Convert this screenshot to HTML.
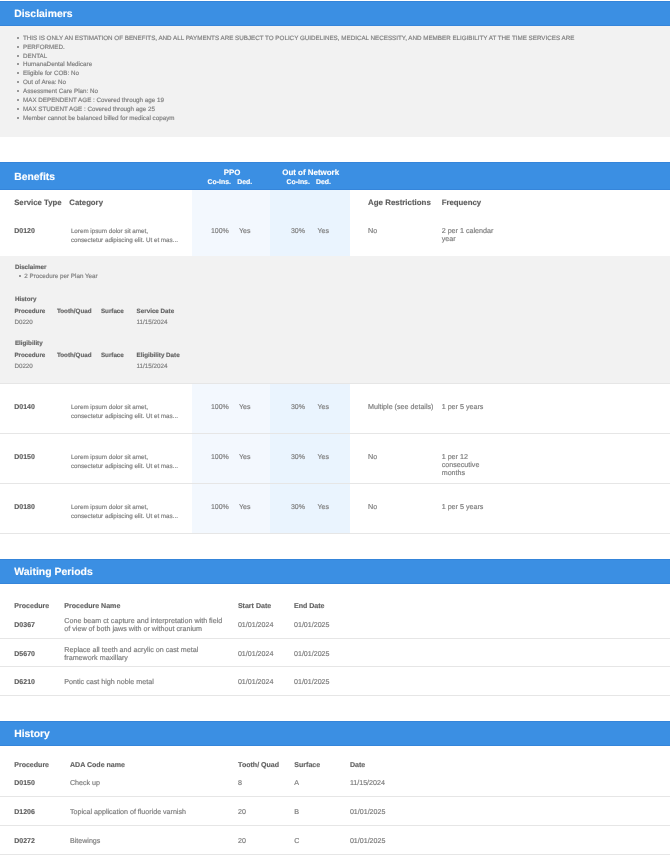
<!DOCTYPE html>
<html><head><meta charset="utf-8"><style>
html,body{margin:0;padding:0;background:#fff;}
body{width:670px;height:856px;position:relative;overflow:hidden;will-change:transform;font-family:"Liberation Sans",sans-serif;}
.t{position:absolute;white-space:nowrap;text-rendering:geometricPrecision;}
.r{position:absolute;}
</style></head><body>
<div class="r" style="left:0px;top:1px;width:670px;height:25px;background:#3b8fe3"></div>
<div class="r" style="left:0px;top:1px;width:670px;height:1px;background:#3585da"></div>
<div class="r" style="left:0px;top:25px;width:670px;height:1px;background:#3585da"></div>
<div class="t" style="left:14.2px;top:9px;font-size:10.4px;line-height:11.96px;color:#fff;font-weight:bold;-webkit-text-stroke:0.2px rgba(255,255,255,0.7);">Disclaimers</div>
<div class="r" style="left:0px;top:26px;width:670px;height:111px;background:#f2f2f2"></div>
<div class="r" style="left:17px;top:37px;width:2px;height:1.5px;border-radius:0;background:#999999"></div>
<div class="t" style="left:23px;top:35px;font-size:6.25px;line-height:7.19px;color:#6a6a6a;-webkit-text-stroke:0.2px #9a9a9a;">THIS IS ONLY AN ESTIMATION OF BENEFITS, AND ALL PAYMENTS ARE SUBJECT TO POLICY GUIDELINES, MEDICAL NECESSITY, AND MEMBER ELIGIBILITY AT THE TIME SERVICES ARE</div>
<div class="r" style="left:17px;top:46px;width:2px;height:1.5px;border-radius:0;background:#999999"></div>
<div class="t" style="left:23px;top:44px;font-size:6.25px;line-height:7.19px;color:#6a6a6a;-webkit-text-stroke:0.2px #9a9a9a;">PERFORMED.</div>
<div class="r" style="left:17px;top:55px;width:2px;height:1.5px;border-radius:0;background:#999999"></div>
<div class="t" style="left:23px;top:53px;font-size:6.25px;line-height:7.19px;color:#6a6a6a;-webkit-text-stroke:0.2px #9a9a9a;">DENTAL</div>
<div class="r" style="left:17px;top:63px;width:2px;height:1.5px;border-radius:0;background:#999999"></div>
<div class="t" style="left:23px;top:61px;font-size:6.25px;line-height:7.19px;color:#6a6a6a;-webkit-text-stroke:0.2px #9a9a9a;">HumanaDental Medicare</div>
<div class="r" style="left:17px;top:72px;width:2px;height:1.5px;border-radius:0;background:#999999"></div>
<div class="t" style="left:23px;top:70px;font-size:6.25px;line-height:7.19px;color:#6a6a6a;-webkit-text-stroke:0.2px #9a9a9a;">Eligible for COB: No</div>
<div class="r" style="left:17px;top:81px;width:2px;height:1.5px;border-radius:0;background:#999999"></div>
<div class="t" style="left:23px;top:79px;font-size:6.25px;line-height:7.19px;color:#6a6a6a;-webkit-text-stroke:0.2px #9a9a9a;">Out of Area: No</div>
<div class="r" style="left:17px;top:90px;width:2px;height:1.5px;border-radius:0;background:#999999"></div>
<div class="t" style="left:23px;top:88px;font-size:6.25px;line-height:7.19px;color:#6a6a6a;-webkit-text-stroke:0.2px #9a9a9a;">Assessment Care Plan: No</div>
<div class="r" style="left:17px;top:99px;width:2px;height:1.5px;border-radius:0;background:#999999"></div>
<div class="t" style="left:23px;top:97px;font-size:6.25px;line-height:7.19px;color:#6a6a6a;-webkit-text-stroke:0.2px #9a9a9a;">MAX DEPENDENT AGE : Covered through age 19</div>
<div class="r" style="left:17px;top:108px;width:2px;height:1.5px;border-radius:0;background:#999999"></div>
<div class="t" style="left:23px;top:106px;font-size:6.25px;line-height:7.19px;color:#6a6a6a;-webkit-text-stroke:0.2px #9a9a9a;">MAX STUDENT AGE : Covered through age 25</div>
<div class="r" style="left:17px;top:117px;width:2px;height:1.5px;border-radius:0;background:#999999"></div>
<div class="t" style="left:23px;top:115px;font-size:6.25px;line-height:7.19px;color:#6a6a6a;-webkit-text-stroke:0.2px #9a9a9a;">Member cannot be balanced billed for medical copaym</div>
<div class="r" style="left:0px;top:162px;width:670px;height:28px;background:#3b8fe3"></div>
<div class="r" style="left:0px;top:162px;width:670px;height:1px;background:#3585da"></div>
<div class="r" style="left:0px;top:189px;width:670px;height:1px;background:#3585da"></div>
<div class="t" style="left:14.2px;top:172px;font-size:10.35px;line-height:11.9px;color:#fff;font-weight:bold;-webkit-text-stroke:0.2px rgba(255,255,255,0.7);">Benefits</div>
<div class="t" style="left:132px;width:200px;text-align:center;top:168px;font-size:7.9px;line-height:9.08px;color:#fff;font-weight:bold;-webkit-text-stroke:0.2px rgba(255,255,255,0.7);">PPO</div>
<div class="t" style="left:207.6px;top:179px;font-size:6.9px;line-height:7.93px;color:#fff;font-weight:bold;-webkit-text-stroke:0.2px rgba(255,255,255,0.7);">Co-Ins.</div>
<div class="t" style="left:237.2px;top:179px;font-size:6.9px;line-height:7.93px;color:#fff;font-weight:bold;-webkit-text-stroke:0.2px rgba(255,255,255,0.7);">Ded.</div>
<div class="t" style="left:210.7px;width:200px;text-align:center;top:168px;font-size:7.95px;line-height:9.14px;color:#fff;font-weight:bold;-webkit-text-stroke:0.2px rgba(255,255,255,0.7);">Out of Network</div>
<div class="t" style="left:286.5px;top:179px;font-size:6.9px;line-height:7.93px;color:#fff;font-weight:bold;-webkit-text-stroke:0.2px rgba(255,255,255,0.7);">Co-Ins.</div>
<div class="t" style="left:316px;top:179px;font-size:6.9px;line-height:7.93px;color:#fff;font-weight:bold;-webkit-text-stroke:0.2px rgba(255,255,255,0.7);">Ded.</div>
<div class="r" style="left:192px;top:190px;width:78px;height:66px;background:#f3f8fe"></div>
<div class="r" style="left:270px;top:190px;width:80px;height:66px;background:#eaf4fe"></div>
<div class="t" style="left:14.2px;top:199px;font-size:7.78px;line-height:8.95px;color:#555555;font-weight:bold;-webkit-text-stroke:0.2px #888888;">Service Type</div>
<div class="t" style="left:69.3px;top:199px;font-size:7.78px;line-height:8.95px;color:#555555;font-weight:bold;-webkit-text-stroke:0.2px #888888;">Category</div>
<div class="t" style="left:368.1px;top:198px;font-size:7.9px;line-height:9.08px;color:#555555;font-weight:bold;-webkit-text-stroke:0.2px #888888;">Age Restrictions</div>
<div class="t" style="left:441.7px;top:199px;font-size:7.8px;line-height:8.97px;color:#555555;font-weight:bold;-webkit-text-stroke:0.2px #888888;">Frequency</div>
<div class="t" style="left:14.2px;top:228px;font-size:7.0px;line-height:8.05px;color:#555555;font-weight:bold;-webkit-text-stroke:0.2px #888888;">D0120</div>
<div class="t" style="left:70.9px;top:228px;font-size:6.25px;line-height:8.8px;color:#6a6a6a;-webkit-text-stroke:0.2px #9a9a9a;">Lorem ipsum dolor sit amet,<br>consectetur adipiscing elit. Ut et mas...</div>
<div class="t" style="left:210.9px;top:228px;font-size:7.0px;line-height:8.05px;color:#6a6a6a;-webkit-text-stroke:0.2px #9a9a9a;">100%</div>
<div class="t" style="left:239px;top:228px;font-size:7.0px;line-height:8.05px;color:#6a6a6a;-webkit-text-stroke:0.2px #9a9a9a;">Yes</div>
<div class="t" style="left:290.9px;top:228px;font-size:7.0px;line-height:8.05px;color:#6a6a6a;-webkit-text-stroke:0.2px #9a9a9a;">30%</div>
<div class="t" style="left:317.6px;top:228px;font-size:7.0px;line-height:8.05px;color:#6a6a6a;-webkit-text-stroke:0.2px #9a9a9a;">Yes</div>
<div class="t" style="left:368px;top:227px;font-size:7.15px;line-height:8.22px;color:#6a6a6a;-webkit-text-stroke:0.2px #9a9a9a;">No</div>
<div class="t" style="left:441.7px;top:228px;font-size:7.15px;line-height:7.9px;color:#6a6a6a;-webkit-text-stroke:0.2px #9a9a9a;">2 per 1 calendar<br>year</div>
<div class="r" style="left:0px;top:256px;width:670px;height:127px;background:#f2f2f2"></div>
<div class="r" style="left:0px;top:383px;width:670px;height:1px;background:#e6e6e6"></div>
<div class="t" style="left:14.9px;top:264px;font-size:6.25px;line-height:7.19px;color:#555555;font-weight:bold;-webkit-text-stroke:0.2px #888888;">Disclaimer</div>
<div class="r" style="left:19px;top:275px;width:2px;height:1.5px;border-radius:0;background:#999999"></div>
<div class="t" style="left:24.3px;top:273px;font-size:6.25px;line-height:7.19px;color:#6a6a6a;-webkit-text-stroke:0.2px #9a9a9a;">2 Procedure per Plan Year</div>
<div class="t" style="left:14.9px;top:296px;font-size:6.25px;line-height:7.19px;color:#555555;font-weight:bold;-webkit-text-stroke:0.2px #888888;">History</div>
<div class="t" style="left:14.4px;top:308px;font-size:6.25px;line-height:7.19px;color:#555555;font-weight:bold;-webkit-text-stroke:0.2px #888888;">Procedure</div>
<div class="t" style="left:56.9px;top:308px;font-size:6.25px;line-height:7.19px;color:#555555;font-weight:bold;-webkit-text-stroke:0.2px #888888;">Tooth/Quad</div>
<div class="t" style="left:100.9px;top:308px;font-size:6.25px;line-height:7.19px;color:#555555;font-weight:bold;-webkit-text-stroke:0.2px #888888;">Surface</div>
<div class="t" style="left:136.6px;top:308px;font-size:6.25px;line-height:7.19px;color:#555555;font-weight:bold;-webkit-text-stroke:0.2px #888888;">Service Date</div>
<div class="t" style="left:14.4px;top:319px;font-size:6.25px;line-height:7.19px;color:#6a6a6a;-webkit-text-stroke:0.2px #9a9a9a;">D0220</div>
<div class="t" style="left:136.6px;top:319px;font-size:6.25px;line-height:7.19px;color:#6a6a6a;-webkit-text-stroke:0.2px #9a9a9a;">11/15/2024</div>
<div class="t" style="left:14.9px;top:340px;font-size:6.25px;line-height:7.19px;color:#555555;font-weight:bold;-webkit-text-stroke:0.2px #888888;">Eligibility</div>
<div class="t" style="left:14.4px;top:352px;font-size:6.25px;line-height:7.19px;color:#555555;font-weight:bold;-webkit-text-stroke:0.2px #888888;">Procedure</div>
<div class="t" style="left:56.9px;top:352px;font-size:6.25px;line-height:7.19px;color:#555555;font-weight:bold;-webkit-text-stroke:0.2px #888888;">Tooth/Quad</div>
<div class="t" style="left:100.9px;top:352px;font-size:6.25px;line-height:7.19px;color:#555555;font-weight:bold;-webkit-text-stroke:0.2px #888888;">Surface</div>
<div class="t" style="left:136.6px;top:352px;font-size:6.25px;line-height:7.19px;color:#555555;font-weight:bold;-webkit-text-stroke:0.2px #888888;">Eligibility Date</div>
<div class="t" style="left:14.4px;top:363px;font-size:6.25px;line-height:7.19px;color:#6a6a6a;-webkit-text-stroke:0.2px #9a9a9a;">D0220</div>
<div class="t" style="left:136.6px;top:363px;font-size:6.25px;line-height:7.19px;color:#6a6a6a;-webkit-text-stroke:0.2px #9a9a9a;">11/15/2024</div>
<div class="r" style="left:192px;top:384px;width:78px;height:49px;background:#f3f8fe"></div>
<div class="r" style="left:270px;top:384px;width:80px;height:49px;background:#eaf4fe"></div>
<div class="r" style="left:0px;top:433px;width:670px;height:1px;background:#e6e6e6"></div>
<div class="t" style="left:14.2px;top:404px;font-size:7.0px;line-height:8.05px;color:#555555;font-weight:bold;-webkit-text-stroke:0.2px #888888;">D0140</div>
<div class="t" style="left:70.9px;top:404px;font-size:6.25px;line-height:8.8px;color:#6a6a6a;-webkit-text-stroke:0.2px #9a9a9a;">Lorem ipsum dolor sit amet,<br>consectetur adipiscing elit. Ut et mas...</div>
<div class="t" style="left:210.9px;top:404px;font-size:7.0px;line-height:8.05px;color:#6a6a6a;-webkit-text-stroke:0.2px #9a9a9a;">100%</div>
<div class="t" style="left:239px;top:404px;font-size:7.0px;line-height:8.05px;color:#6a6a6a;-webkit-text-stroke:0.2px #9a9a9a;">Yes</div>
<div class="t" style="left:290.9px;top:404px;font-size:7.0px;line-height:8.05px;color:#6a6a6a;-webkit-text-stroke:0.2px #9a9a9a;">30%</div>
<div class="t" style="left:317.6px;top:404px;font-size:7.0px;line-height:8.05px;color:#6a6a6a;-webkit-text-stroke:0.2px #9a9a9a;">Yes</div>
<div class="t" style="left:368px;top:403px;font-size:7.15px;line-height:8.22px;color:#6a6a6a;-webkit-text-stroke:0.2px #9a9a9a;">Multiple (see details)</div>
<div class="t" style="left:441.7px;top:404px;font-size:7.15px;line-height:7.9px;color:#6a6a6a;-webkit-text-stroke:0.2px #9a9a9a;">1 per 5 years</div>
<div class="r" style="left:192px;top:434px;width:78px;height:49px;background:#f3f8fe"></div>
<div class="r" style="left:270px;top:434px;width:80px;height:49px;background:#eaf4fe"></div>
<div class="r" style="left:0px;top:483px;width:670px;height:1px;background:#e6e6e6"></div>
<div class="t" style="left:14.2px;top:454px;font-size:7.0px;line-height:8.05px;color:#555555;font-weight:bold;-webkit-text-stroke:0.2px #888888;">D0150</div>
<div class="t" style="left:70.9px;top:454px;font-size:6.25px;line-height:8.8px;color:#6a6a6a;-webkit-text-stroke:0.2px #9a9a9a;">Lorem ipsum dolor sit amet,<br>consectetur adipiscing elit. Ut et mas...</div>
<div class="t" style="left:210.9px;top:454px;font-size:7.0px;line-height:8.05px;color:#6a6a6a;-webkit-text-stroke:0.2px #9a9a9a;">100%</div>
<div class="t" style="left:239px;top:454px;font-size:7.0px;line-height:8.05px;color:#6a6a6a;-webkit-text-stroke:0.2px #9a9a9a;">Yes</div>
<div class="t" style="left:290.9px;top:454px;font-size:7.0px;line-height:8.05px;color:#6a6a6a;-webkit-text-stroke:0.2px #9a9a9a;">30%</div>
<div class="t" style="left:317.6px;top:454px;font-size:7.0px;line-height:8.05px;color:#6a6a6a;-webkit-text-stroke:0.2px #9a9a9a;">Yes</div>
<div class="t" style="left:368px;top:453px;font-size:7.15px;line-height:8.22px;color:#6a6a6a;-webkit-text-stroke:0.2px #9a9a9a;">No</div>
<div class="t" style="left:441.7px;top:454px;font-size:7.15px;line-height:7.9px;color:#6a6a6a;-webkit-text-stroke:0.2px #9a9a9a;">1 per 12<br>consecutive<br>months</div>
<div class="r" style="left:192px;top:484px;width:78px;height:49px;background:#f3f8fe"></div>
<div class="r" style="left:270px;top:484px;width:80px;height:49px;background:#eaf4fe"></div>
<div class="r" style="left:0px;top:533px;width:670px;height:1px;background:#e6e6e6"></div>
<div class="t" style="left:14.2px;top:504px;font-size:7.0px;line-height:8.05px;color:#555555;font-weight:bold;-webkit-text-stroke:0.2px #888888;">D0180</div>
<div class="t" style="left:70.9px;top:504px;font-size:6.25px;line-height:8.8px;color:#6a6a6a;-webkit-text-stroke:0.2px #9a9a9a;">Lorem ipsum dolor sit amet,<br>consectetur adipiscing elit. Ut et mas...</div>
<div class="t" style="left:210.9px;top:504px;font-size:7.0px;line-height:8.05px;color:#6a6a6a;-webkit-text-stroke:0.2px #9a9a9a;">100%</div>
<div class="t" style="left:239px;top:504px;font-size:7.0px;line-height:8.05px;color:#6a6a6a;-webkit-text-stroke:0.2px #9a9a9a;">Yes</div>
<div class="t" style="left:290.9px;top:504px;font-size:7.0px;line-height:8.05px;color:#6a6a6a;-webkit-text-stroke:0.2px #9a9a9a;">30%</div>
<div class="t" style="left:317.6px;top:504px;font-size:7.0px;line-height:8.05px;color:#6a6a6a;-webkit-text-stroke:0.2px #9a9a9a;">Yes</div>
<div class="t" style="left:368px;top:503px;font-size:7.15px;line-height:8.22px;color:#6a6a6a;-webkit-text-stroke:0.2px #9a9a9a;">No</div>
<div class="t" style="left:441.7px;top:504px;font-size:7.15px;line-height:7.9px;color:#6a6a6a;-webkit-text-stroke:0.2px #9a9a9a;">1 per 5 years</div>
<div class="r" style="left:0px;top:559px;width:670px;height:25px;background:#3b8fe3"></div>
<div class="r" style="left:0px;top:559px;width:670px;height:1px;background:#3585da"></div>
<div class="r" style="left:0px;top:583px;width:670px;height:1px;background:#3585da"></div>
<div class="t" style="left:14.3px;top:567px;font-size:10.45px;line-height:12.02px;color:#fff;font-weight:bold;-webkit-text-stroke:0.2px rgba(255,255,255,0.7);">Waiting Periods</div>
<div class="t" style="left:14.3px;top:603px;font-size:7.05px;line-height:8.11px;color:#555555;font-weight:bold;-webkit-text-stroke:0.2px #888888;">Procedure</div>
<div class="t" style="left:64.3px;top:603px;font-size:7.05px;line-height:8.11px;color:#555555;font-weight:bold;-webkit-text-stroke:0.2px #888888;">Procedure Name</div>
<div class="t" style="left:237.9px;top:603px;font-size:7.05px;line-height:8.11px;color:#555555;font-weight:bold;-webkit-text-stroke:0.2px #888888;">Start Date</div>
<div class="t" style="left:294px;top:603px;font-size:7.05px;line-height:8.11px;color:#555555;font-weight:bold;-webkit-text-stroke:0.2px #888888;">End Date</div>
<div class="t" style="left:14.3px;top:622px;font-size:7.0px;line-height:8.05px;color:#555555;font-weight:bold;-webkit-text-stroke:0.2px #888888;">D0367</div>
<div class="t" style="left:64.3px;top:618px;font-size:7.17px;line-height:7.6px;color:#6a6a6a;-webkit-text-stroke:0.2px #9a9a9a;">Cone beam ct capture and interpretation with field<br>of view of both jaws with or without cranium</div>
<div class="t" style="left:237.9px;top:621px;font-size:7.1px;line-height:8.16px;color:#6a6a6a;-webkit-text-stroke:0.2px #9a9a9a;">01/01/2024</div>
<div class="t" style="left:294px;top:621px;font-size:7.1px;line-height:8.16px;color:#6a6a6a;-webkit-text-stroke:0.2px #9a9a9a;">01/01/2025</div>
<div class="r" style="left:0px;top:638px;width:670px;height:1px;background:#e6e6e6"></div>
<div class="t" style="left:14.3px;top:651px;font-size:7.0px;line-height:8.05px;color:#555555;font-weight:bold;-webkit-text-stroke:0.2px #888888;">D5670</div>
<div class="t" style="left:64.3px;top:647px;font-size:7.17px;line-height:7.6px;color:#6a6a6a;-webkit-text-stroke:0.2px #9a9a9a;">Replace all teeth and acrylic on cast metal<br>framework maxillary</div>
<div class="t" style="left:237.9px;top:650px;font-size:7.1px;line-height:8.16px;color:#6a6a6a;-webkit-text-stroke:0.2px #9a9a9a;">01/01/2024</div>
<div class="t" style="left:294px;top:650px;font-size:7.1px;line-height:8.16px;color:#6a6a6a;-webkit-text-stroke:0.2px #9a9a9a;">01/01/2025</div>
<div class="r" style="left:0px;top:666px;width:670px;height:1px;background:#e6e6e6"></div>
<div class="t" style="left:14.3px;top:679px;font-size:7.0px;line-height:8.05px;color:#555555;font-weight:bold;-webkit-text-stroke:0.2px #888888;">D6210</div>
<div class="t" style="left:64.3px;top:679px;font-size:7.17px;line-height:7.6px;color:#6a6a6a;-webkit-text-stroke:0.2px #9a9a9a;">Pontic cast high noble metal</div>
<div class="t" style="left:237.9px;top:678px;font-size:7.1px;line-height:8.16px;color:#6a6a6a;-webkit-text-stroke:0.2px #9a9a9a;">01/01/2024</div>
<div class="t" style="left:294px;top:678px;font-size:7.1px;line-height:8.16px;color:#6a6a6a;-webkit-text-stroke:0.2px #9a9a9a;">01/01/2025</div>
<div class="r" style="left:0px;top:695px;width:670px;height:1px;background:#e6e6e6"></div>
<div class="r" style="left:0px;top:721px;width:670px;height:25px;background:#3b8fe3"></div>
<div class="r" style="left:0px;top:721px;width:670px;height:1px;background:#3585da"></div>
<div class="r" style="left:0px;top:745px;width:670px;height:1px;background:#3585da"></div>
<div class="t" style="left:14.2px;top:729px;font-size:10.35px;line-height:11.9px;color:#fff;font-weight:bold;-webkit-text-stroke:0.2px rgba(255,255,255,0.7);">History</div>
<div class="t" style="left:14.2px;top:762px;font-size:7.05px;line-height:8.11px;color:#555555;font-weight:bold;-webkit-text-stroke:0.2px #888888;">Procedure</div>
<div class="t" style="left:70px;top:762px;font-size:7.05px;line-height:8.11px;color:#555555;font-weight:bold;-webkit-text-stroke:0.2px #888888;">ADA Code name</div>
<div class="t" style="left:238.1px;top:762px;font-size:7.05px;line-height:8.11px;color:#555555;font-weight:bold;-webkit-text-stroke:0.2px #888888;">Tooth/ Quad</div>
<div class="t" style="left:294.3px;top:762px;font-size:7.05px;line-height:8.11px;color:#555555;font-weight:bold;-webkit-text-stroke:0.2px #888888;">Surface</div>
<div class="t" style="left:349.9px;top:762px;font-size:7.05px;line-height:8.11px;color:#555555;font-weight:bold;-webkit-text-stroke:0.2px #888888;">Date</div>
<div class="t" style="left:14.2px;top:780px;font-size:7.0px;line-height:8.05px;color:#555555;font-weight:bold;-webkit-text-stroke:0.2px #888888;">D0150</div>
<div class="t" style="left:70px;top:779px;font-size:7.1px;line-height:8.16px;color:#6a6a6a;-webkit-text-stroke:0.2px #9a9a9a;">Check up</div>
<div class="t" style="left:238.1px;top:779px;font-size:7.1px;line-height:8.16px;color:#6a6a6a;-webkit-text-stroke:0.2px #9a9a9a;">8</div>
<div class="t" style="left:294.3px;top:779px;font-size:7.1px;line-height:8.16px;color:#6a6a6a;-webkit-text-stroke:0.2px #9a9a9a;">A</div>
<div class="t" style="left:349.9px;top:779px;font-size:7.1px;line-height:8.16px;color:#6a6a6a;-webkit-text-stroke:0.2px #9a9a9a;">11/15/2024</div>
<div class="r" style="left:0px;top:796px;width:670px;height:1px;background:#e6e6e6"></div>
<div class="t" style="left:14.2px;top:809px;font-size:7.0px;line-height:8.05px;color:#555555;font-weight:bold;-webkit-text-stroke:0.2px #888888;">D1206</div>
<div class="t" style="left:70px;top:808px;font-size:7.1px;line-height:8.16px;color:#6a6a6a;-webkit-text-stroke:0.2px #9a9a9a;">Topical application of fluoride varnish</div>
<div class="t" style="left:238.1px;top:808px;font-size:7.1px;line-height:8.16px;color:#6a6a6a;-webkit-text-stroke:0.2px #9a9a9a;">20</div>
<div class="t" style="left:294.3px;top:808px;font-size:7.1px;line-height:8.16px;color:#6a6a6a;-webkit-text-stroke:0.2px #9a9a9a;">B</div>
<div class="t" style="left:349.9px;top:808px;font-size:7.1px;line-height:8.16px;color:#6a6a6a;-webkit-text-stroke:0.2px #9a9a9a;">01/01/2025</div>
<div class="r" style="left:0px;top:825px;width:670px;height:1px;background:#e6e6e6"></div>
<div class="t" style="left:14.2px;top:838px;font-size:7.0px;line-height:8.05px;color:#555555;font-weight:bold;-webkit-text-stroke:0.2px #888888;">D0272</div>
<div class="t" style="left:70px;top:837px;font-size:7.1px;line-height:8.16px;color:#6a6a6a;-webkit-text-stroke:0.2px #9a9a9a;">Bitewings</div>
<div class="t" style="left:238.1px;top:837px;font-size:7.1px;line-height:8.16px;color:#6a6a6a;-webkit-text-stroke:0.2px #9a9a9a;">20</div>
<div class="t" style="left:294.3px;top:837px;font-size:7.1px;line-height:8.16px;color:#6a6a6a;-webkit-text-stroke:0.2px #9a9a9a;">C</div>
<div class="t" style="left:349.9px;top:837px;font-size:7.1px;line-height:8.16px;color:#6a6a6a;-webkit-text-stroke:0.2px #9a9a9a;">01/01/2025</div>
<div class="r" style="left:0px;top:854px;width:670px;height:1px;background:#e6e6e6"></div>
</body></html>
